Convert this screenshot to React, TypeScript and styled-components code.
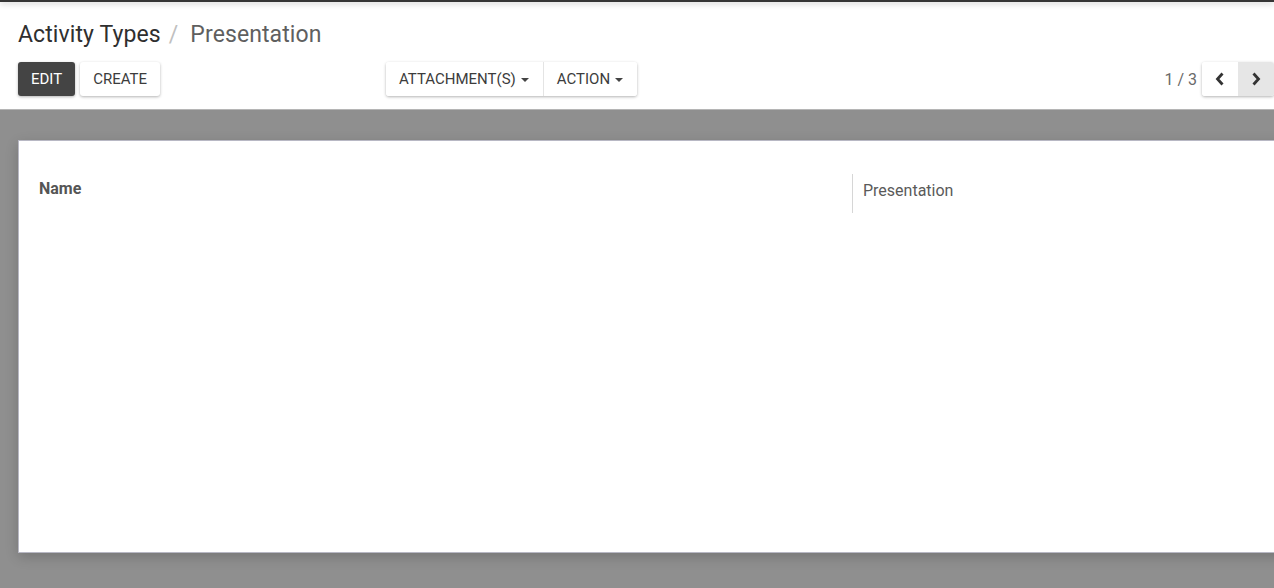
import styled, { createGlobalStyle } from "styled-components";

const GlobalStyle = createGlobalStyle`
  html, body {
    margin: 0;
    padding: 0;
    height: 100%;
    overflow: hidden;
    background: #8f8f8f;
    font-family: Roboto, "Noto Sans", sans-serif;
  }
`;

export default function App() {
  return (
    <>
      <GlobalStyle />
      <Page>
        <TopBar />
        <ControlPanel>
          <Breadcrumb>
            <Crumb>Activity Types</Crumb>
            <Slash>/</Slash>
            <Crumb $active>Presentation</Crumb>
          </Breadcrumb>
          <ButtonRow>
            <Left>
              <Btn $primary>EDIT</Btn>
              <Btn>CREATE</Btn>
            </Left>
            <Center>
              <Group>
                <GroupBtn>
                  ATTACHMENT(S) <Caret />
                </GroupBtn>
                <GroupBtn>
                  ACTION <Caret />
                </GroupBtn>
              </Group>
            </Center>
            <Right>
              <PagerValue>1 / 3</PagerValue>
              <Group>
                <PagerBtn>
                  <Chevron dir="left" />
                </PagerBtn>
                <PagerBtn $hover>
                  <Chevron dir="right" />
                </PagerBtn>
              </Group>
            </Right>
          </ButtonRow>
        </ControlPanel>
        <Content>
          <Sheet>
            <FieldRow>
              <Label>Name</Label>
              <Value>Presentation</Value>
            </FieldRow>
          </Sheet>
        </Content>
      </Page>
    </>
  );
}

function Chevron({ dir }: { dir: "left" | "right" }) {
  return (
    <svg width="10" height="14" viewBox="0 0 10 14">
      <path
        d={dir === "left" ? "M7.5 1.5 L2.5 7 L7.5 12.5" : "M2.5 1.5 L7.5 7 L2.5 12.5"}
        fill="none"
        stroke="#333"
        strokeWidth="2.8"
      />
    </svg>
  );
}

const Page = styled.div`
  display: flex;
  flex-direction: column;
  height: 588px;
`;

const TopBar = styled.div`
  height: 2px;
  background: #353535;
  box-shadow: 0 1px 6px rgba(0, 0, 0, 0.35);
  position: relative;
  z-index: 2;
`;

const ControlPanel = styled.div`
  background: #fff;
  padding: 18px 0 11px 18px;
  border-bottom: 1px solid #b5b5b5;
  height: 78px;
`;

const Breadcrumb = styled.div`
  display: flex;
  align-items: center;
  font-size: 23px;
  line-height: 30px;
  letter-spacing: 0.1px;
`;

const Crumb = styled.span<{ $active?: boolean }>`
  color: ${(p) => (p.$active ? "#5f5f5f" : "#2f2f2f")};
`;

const Slash = styled.span`
  color: #c0c0c0;
  margin: 0 12px 0 8px;
`;

const ButtonRow = styled.div`
  display: grid;
  grid-template-columns: 368px 1fr auto;
  align-items: center;
  margin-top: 12px;
`;

const Left = styled.div`
  display: flex;
  gap: 5px;
`;

const Center = styled.div`
  display: flex;
`;

const Right = styled.div`
  display: flex;
  align-items: center;
  gap: 5px;
`;

const Btn = styled.button<{ $primary?: boolean }>`
  height: 34px;
  padding: 0 13px;
  border: none;
  border-radius: 3px;
  font-family: Roboto, sans-serif;
  font-size: 15px;
  color: ${(p) => (p.$primary ? "#fff" : "#3c3c3c")};
  background: ${(p) => (p.$primary ? "#444" : "#fff")};
  box-shadow: 0 1px 3px rgba(0, 0, 0, 0.3);
`;

const Group = styled.div`
  display: flex;
  border-radius: 3px;
  background: #fff;
  box-shadow: 0 1px 3px rgba(0, 0, 0, 0.3);
  overflow: hidden;
`;

const GroupBtn = styled.button`
  height: 34px;
  padding: 0 14px 0 13px;
  border: none;
  background: #fff;
  font-family: Roboto, sans-serif;
  font-size: 15px;
  color: #3c3c3c;
  display: flex;
  align-items: center;
  gap: 5px;
  & + & {
    border-left: 1px solid #e4e4e4;
  }
`;

const Caret = styled.span`
  width: 0;
  height: 0;
  border-left: 4.5px solid transparent;
  border-right: 4.5px solid transparent;
  border-top: 4.5px solid #444;
  margin-top: 2px;
`;

const PagerValue = styled.span`
  font-size: 16px;
  color: #6a6a6a;
`;

const PagerBtn = styled.button<{ $hover?: boolean }>`
  width: 36px;
  height: 34px;
  border: none;
  background: ${(p) => (p.$hover ? "#e6e6e6" : "#fff")};
  display: flex;
  align-items: center;
  justify-content: center;
`;

const Content = styled.div`
  flex: 1;
  padding: 30px 0 0 18px;
  overflow: hidden;
`;

const Sheet = styled.div`
  background: #fff;
  height: 413px;
  margin-right: -20px;
  box-shadow: 0 4px 12px rgba(0, 0, 0, 0.18);
  border: 1px solid #b8b8c4;
  box-sizing: border-box;
  padding: 33px 0 0 20px;
`;

const FieldRow = styled.div`
  display: grid;
  grid-template-columns: 813px 1fr;
`;

const Label = styled.div`
  font-size: 16px;
  font-weight: 700;
  color: #555;
  padding-top: 5px;
`;

const Value = styled.div`
  border-left: 1px solid #d6d6d6;
  padding: 7px 10px 0;
  height: 32px;
  font-size: 16px;
  color: #5a5a5a;
`;
